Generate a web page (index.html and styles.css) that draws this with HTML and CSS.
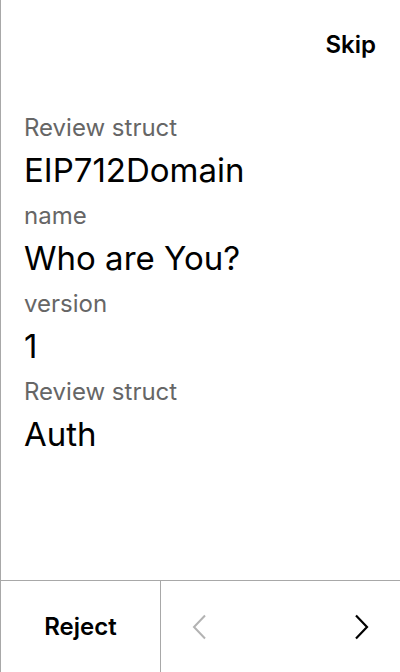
FILE: index.html
```html
<!DOCTYPE html>
<html>
<head>
<meta charset="utf-8">
<link rel="stylesheet" href="styles.css">
</head>
<body>
<div class="screen">
  <header class="top">
    <span class="skip">Skip</span>
  </header>
  <main class="fields">
    <div class="label">Review struct</div>
    <div class="value">EIP712Domain</div>
    <div class="label">name</div>
    <div class="value">Who are You?</div>
    <div class="label">version</div>
    <div class="value">1</div>
    <div class="label">Review struct</div>
    <div class="value">Auth</div>
  </main>
  <footer class="bottom">
    <div class="reject">Reject</div>
    <div class="nav">
      <svg class="chev" width="16" height="26" viewBox="0 0 16 26"><path d="M13 1.5 L2 13 L13 24.5" fill="none" stroke="#b3b3b3" stroke-width="2"/></svg>
      <svg class="chev" width="16" height="26" viewBox="0 0 16 26"><path d="M3 1.5 L14 13 L3 24.5" fill="none" stroke="#000" stroke-width="2.2"/></svg>
    </div>
  </footer>
</div>
</body>
</html>
```
FILE: styles.css
```css
html, body {
  margin: 0;
  padding: 0;
  background: #fff;
}
body {
  font-family: Inter, "Noto Sans", sans-serif;
  color: #000;
}
.screen {
  width: 399px;
  height: 672px;
  border-left: 1px solid #a8a8a8;
  display: flex;
  flex-direction: column;
}
.top {
  height: 88px;
  display: flex;
  justify-content: flex-end;
  align-items: center;
  padding-right: 24px;
}
.skip {
  font-size: 24px;
  font-weight: 600;
}
.fields {
  flex: 1;
  padding: 24px 24px 0 23px;
  display: flex;
  flex-direction: column;
}
.label {
  font-size: 24px;
  line-height: 32px;
  color: #666;
}
.value {
  font-size: 33px;
  line-height: 44px;
  margin-top: 4px;
  margin-bottom: 8px;
}
.bottom {
  height: 91px;
  border-top: 1px solid #a8a8a8;
  display: flex;
}
.reject {
  width: 159px;
  border-right: 1px solid #a8a8a8;
  display: flex;
  align-items: center;
  justify-content: center;
  font-size: 24px;
  font-weight: 600;
}
.nav {
  flex: 1;
  display: flex;
  align-items: center;
  justify-content: space-between;
  padding: 0 31px 0 31px;
}
.chev {
  display: block;
}
```
